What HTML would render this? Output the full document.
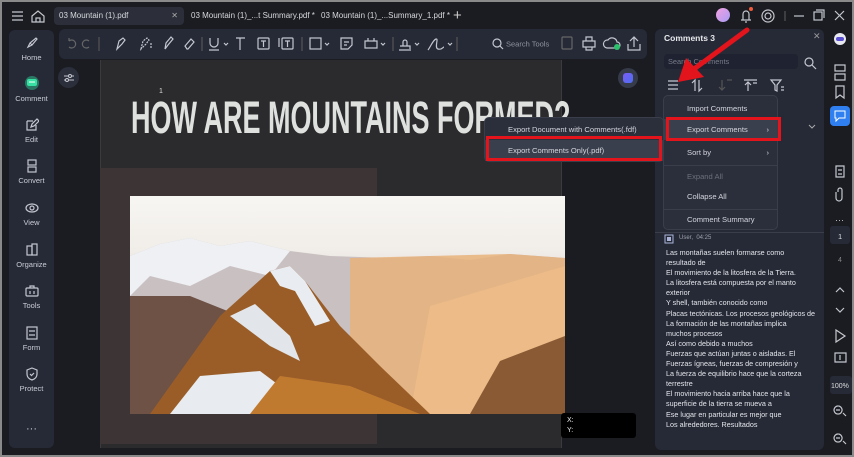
<!DOCTYPE html>
<html><head><meta charset="utf-8"><style>
*{margin:0;padding:0;box-sizing:border-box}
body{width:854px;height:457px;background:#8a8a8a;font-family:"Liberation Sans",sans-serif;overflow:hidden;position:relative}
.app{position:absolute;left:2px;top:2px;width:850px;height:453px;background:#1b1c21}
.abs{position:absolute}
.tab{position:absolute;top:5px;height:18px;font-size:8px;color:#d6d8de;line-height:18px;padding-left:5px}
.side{left:7px;top:28px;width:45px;height:418px;background:#262a37;border-radius:6px}
.si{position:absolute;left:0;width:45px;text-align:center;font-size:7.5px;color:#c9ccd4}
.si svg{display:block;margin:0 auto 3px}
.tb{left:57px;top:27px;width:588px;height:30px;background:#262a37;border-radius:6px}
.ic{stroke:#c4c7cf;fill:none;stroke-width:1.2}
.panel{left:653px;top:27px;width:169px;height:421px;background:#262a37;border-radius:6px}
.menu{background:#2b2f3c;border:1px solid #3a3e4a;border-radius:5px;font-size:7.6px;color:#d3d5dc}
.mi{position:absolute;left:0;right:0;height:21px;line-height:21px;padding-left:23px}
.red{position:absolute;border:3px solid #e3141c}
.ct{font-size:7.2px;color:#e4e6ea;line-height:10.1px}
</style></head><body><div class="app">
<svg class="abs" style="left:8px;top:6px" width="40" height="16"><g class="ic"><path d="M2 4h11M2 8h11M2 12h11"/><path d="M22 8l6-5 6 5v6h-12z"/><path d="M26 14v-4h4v4"/></g><path d="M45 3v11" stroke="#555" /></svg>
<div class="tab" style="left:52px;width:130px;background:#2c2f39;border-radius:4px">03 Mountain (1).pdf<span style="position:absolute;right:6px;color:#aaa">✕</span></div>
<div class="tab" style="left:184px">03 Mountain (1)_...t Summary.pdf *</div>
<div class="tab" style="left:314px">03 Mountain (1)_...Summary_1.pdf *</div>
<div class="tab" style="left:446px;font-size:15px;color:#ccc">+</div>
<div class="abs" style="left:714px;top:6px;width:14px;height:14px;border-radius:50%;background:linear-gradient(135deg,#f3a0e0,#a89cf5)"></div>
<svg class="abs" style="left:735px;top:4px" width="115" height="20"><g class="ic"><path d="M4 14h10M6 14V8a3 3 0 0 1 6 0v6M8 16h2"/><circle cx="31" cy="10" r="3"/><circle cx="31" cy="10" r="6"/><path d="M48 5v10" stroke="#555"/><path d="M57 10h10"/><rect x="77" y="6" width="8" height="8"/><path d="M79 4h8v8"/><path d="M98 5l9 9M107 5l-9 9"/></g><circle cx="14" cy="3" r="2" fill="#f05a3a"/></svg>
<div class="abs side">
<div class="si" style="top:6px"><svg width="14" height="14" class="ic"><path d="M3 11l2-4 6-5 1 1-5 6-4 2zM5 7l2 2"/></svg>Home</div>
<div class="si" style="top:45px"><svg width="16" height="16"><circle cx="8" cy="8" r="7" fill="#31d69b" opacity=".45"/><rect x="3" y="4" width="10" height="7" rx="2" fill="#37e0a3"/><path d="M5 7h6" stroke="#fff"/></svg>Comment</div>
<div class="si" style="top:88px"><svg width="14" height="14" class="ic"><path d="M2 3h6M2 3v9h9V7M6 9l1-3 5-5 2 2-5 5z"/></svg>Edit</div>
<div class="si" style="top:129px"><svg width="14" height="14" class="ic"><rect x="3" y="1" width="8" height="5"/><rect x="3" y="8" width="8" height="5"/></svg>Convert</div>
<div class="si" style="top:171px"><svg width="14" height="14" class="ic"><ellipse cx="7" cy="7" rx="6" ry="4"/><circle cx="7" cy="7" r="2"/></svg>View</div>
<div class="si" style="top:213px"><svg width="14" height="14" class="ic"><rect x="2" y="3" width="5" height="9"/><rect x="7" y="1" width="5" height="11"/></svg>Organize</div>
<div class="si" style="top:254px"><svg width="14" height="14" class="ic"><rect x="1" y="4" width="12" height="8" rx="1"/><path d="M5 4V2h4v2M5 7v3M9 7v3"/></svg>Tools</div>
<div class="si" style="top:296px"><svg width="14" height="14" class="ic"><rect x="2" y="1" width="10" height="12"/><path d="M4 5h6M4 9h6"/></svg>Form</div>
<div class="si" style="top:337px"><svg width="14" height="14" class="ic"><path d="M7 1l5 2v4c0 3-2 5-5 6-3-1-5-3-5-6V3z"/><path d="M5 7l1.5 1.5L9 6"/></svg>Protect</div>
<div class="si" style="top:393px;font-size:11px">···</div>
</div>
<div class="abs tb"><svg width="588" height="30"><g class="ic">
<path d="M10 12a4 4 0 1 1 0 6M10 12v-3M30 12a4 4 0 1 0 0 6" stroke="#666"/>
<path d="M40 8v14" stroke="#555"/>
<path d="M58 20l2-8 4-3 2 2-3 4z"/><path d="M82 20l2-8 4-3 2 2-3 4zM92 14v6" stroke-dasharray="2 1"/><path d="M106 20l1-6 5-6 2 2-5 6z"/><path d="M128 20l-2-3 6-7 3 3-6 7z"/>
<path d="M143 8v14" stroke="#555"/><path d="M151 9v5a4 4 0 0 0 8 0V9M150 21h10M165 14l2 2 2-2"/>
<path d="M177 9h9M181 9v12"/><rect x="199" y="9" width="11" height="11" rx="1"/><path d="M202 12h5M204.5 12v6"/><rect x="223" y="9" width="11" height="11" rx="1"/><path d="M226 12h5M228.5 12v6M220 9v9"/>
<path d="M243 8v14" stroke="#555"/><rect x="251" y="9" width="11" height="11"/><path d="M266 14l2 2 2-2"/>
<path d="M282 9h11v7l-4 4h-7zM285 13h5M285 16h3"/><path d="M306 12h12v7h-12zM309 9v3M315 9v3M322 14l2 2 2-2"/>
<path d="M334 8v14" stroke="#555"/><path d="M340 21h12M341 17h10v3M344 17v-4a2 2 0 1 1 4 0v4M356 14l2 2 2-2"/>
<path d="M369 21c3-4 5-10 8-11s-2 9 2 10 5-2 6-2M389 14l2 2 2-2"/><path d="M398 8v14" stroke="#555"/>
<circle cx="438" cy="14" r="4"/><path d="M441 17l3 3"/>
<rect x="503" y="8" width="10" height="12" rx="1" stroke="#666"/><path d="M524 12h12v6h-12zM527 12V8h6v4M527 18v3h6v-3"/><path d="M548 19a4 4 0 0 1 1-8 5 5 0 0 1 9 2 3 3 0 0 1 0 6zM575 9v9M571 12l4-4 4 4M569 15v6h12v-6"/></g>
<circle cx="558" cy="18" r="3" fill="#2bc06b"/>
<text x="447" y="17.5" font-size="7.5" fill="#8f93a0" font-family="Liberation Sans">Search Tools</text></svg></div>
<div class="abs" style="left:56px;top:65px;width:21px;height:21px;border-radius:50%;background:#2b2f3b"></div>
<svg class="abs" style="left:60px;top:69px" width="14" height="14"><g stroke="#c4c7cf" fill="none"><path d="M2 5h10M2 9h10"/><circle cx="8" cy="5" r="1.5" fill="#2b2f3b"/><circle cx="5" cy="9" r="1.5" fill="#2b2f3b"/></g></svg>
<div class="abs" style="left:98px;top:58px;width:462px;height:388px;background:#2b2b2e;border-left:1px solid #3b3b3e;border-right:1px solid #3b3b3e"></div>
<div class="abs" style="left:98px;top:166px;width:277px;height:276px;background:#3d3535"></div>
<div class="abs" style="left:157px;top:86px;font-size:7px;color:#ddd">1</div>
<div class="abs" style="left:129px;top:93px;font-size:45px;color:#dfe1df;font-weight:bold;transform:scaleX(0.6);transform-origin:0 0;white-space:nowrap;line-height:45px">HOW ARE MOUNTAINS FORMED?</div>
<div class="abs" style="left:128px;top:194px;width:435px;height:218px;background:linear-gradient(180deg,#f7f6f3 0%,#f1ede8 25%,#ddd4cf 45%,#b59a8a 70%,#8e6a52 100%);overflow:hidden">
<svg width="435" height="218">
<polygon points="0,60 30,48 60,42 90,50 120,45 160,55 200,60 260,62 300,60 340,64 380,58 435,62 435,218 0,218" fill="#c9c0c2"/>
<polygon points="0,60 30,48 60,42 90,50 120,45 160,55 140,80 100,70 60,90 20,80 0,100" fill="#eef0f3"/>
<polygon points="220,62 300,60 380,58 435,62 435,218 220,218" fill="#e8b27a" opacity=".85"/>
<polygon points="300,110 435,70 435,218 280,218" fill="#f1c088" opacity=".6"/>
<polygon points="0,100 60,100 110,120 150,170 120,218 0,218" fill="#6e5246"/>
<polygon points="20,218 90,120 140,75 160,70 175,85 210,130 250,170 300,218" fill="#9a5d28"/>
<polygon points="140,75 160,70 175,85 200,125 185,130 165,95 150,90" fill="#e9edf1"/>
<polygon points="100,120 125,108 160,140 170,165 140,150" fill="#e2e6ea"/>
<polygon points="40,218 70,180 130,175 150,190 160,218" fill="#e8ebef"/>
<polygon points="120,218 150,180 220,190 290,218" fill="#c07a30"/>
<polygon points="340,218 370,165 435,140 435,218" fill="#8a5a34"/>
</svg></div>
<div class="abs" style="left:616px;top:66px;width:20px;height:20px;border-radius:50%;background:#363b4a"></div>
<div class="abs" style="left:621px;top:71px;width:10px;height:10px;border-radius:3px;background:linear-gradient(135deg,#7a5cf5,#4f6ff0)"></div>
<div class="abs" style="left:559px;top:411px;width:75px;height:25px;background:#000;border-radius:3px;color:#eee;font-size:7px;padding:3px 6px;line-height:10px">X:<br>Y:</div>
<div class="abs panel">
<div class="abs" style="left:9px;top:4px;font-size:8.5px;color:#e8e9ec;font-weight:bold">Comments 3</div>
<div class="abs" style="left:158px;top:2px;font-size:9px;color:#999">✕</div>
<div class="abs" style="left:9px;top:25px;width:134px;height:15px;background:#1f2230;border-radius:4px;font-size:7.4px;color:#777b88;padding:3px 4px">Search Comments</div>
<svg class="abs" style="left:148px;top:27px" width="14" height="14"><g stroke="#c4c7cf" fill="none" stroke-width="1.2"><circle cx="6" cy="6" r="4"/><path d="M9 9l4 4"/></g></svg>
<svg class="abs" style="left:9px;top:48px" width="125" height="16"><g stroke="#c4c7cf" fill="none" stroke-width="1.2"><path d="M4 4h10M4 8h10M4 12h10M31 14V3l-3 3M35 3v11l3-3"/><path d="M58 3v10M55 10l3 3 3-3M63 3h5" stroke="#555"/><path d="M84 14V5M81 8l3-3 3 3M80 3h13M89 6h4"/><path d="M107 3h10l-4 5v6l-2-1V8zM117 10h3M117 13h3"/></g></svg>
<div class="abs" style="left:0;top:203px;width:169px;border-top:1px solid #3a3e4a"></div>
<svg class="abs" style="left:9px;top:205px" width="10" height="10"><rect x="1" y="1" width="8" height="8" fill="none" stroke="#a9b4d8"/><rect x="3" y="3" width="4" height="4" fill="#a9b4d8"/></svg>
<div class="abs" style="left:24px;top:206px;font-size:6px;color:#9ea2ad">User,&nbsp; 04:25</div>
<div class="abs ct" style="left:11px;top:219px;width:158px">Las montañas suelen formarse como<br>resultado de<br>El movimiento de la litosfera de la Tierra.<br>La litosfera está compuesta por el manto<br>exterior<br>Y shell, también conocido como<br>Placas tectónicas. Los procesos geológicos de<br>La formación de las montañas implica<br>muchos procesos<br>Así como debido a muchos<br>Fuerzas que actúan juntas o aisladas. El<br>Fuerzas ígneas, fuerzas de compresión y<br>La fuerza de equilibrio hace que la corteza<br>terrestre<br>El movimiento hacia arriba hace que la<br>superficie de la tierra se mueva a<br>Ese lugar en particular es mejor que<br>Los alrededores. Resultados</div>
<svg class="abs" style="left:152px;top:94px" width="10" height="8"><path d="M2 2l3 3 3-3" stroke="#aaa" fill="none"/></svg>
</div>
<svg class="abs" style="left:826px;top:28px" width="24" height="420"><g stroke="#c4c7cf" fill="none" stroke-width="1.2">
<path d="M7 35h10v6H7zM7 44h10v6H7zM8 56h8v12l-4-3-4 3zM8 136h8v11H8zM10 140h4M10 144h4M10 162v-2a2 2 0 0 1 4 0v8a3 3 0 0 1-6 0v-6"/>
<path d="M8 262l4-4 4 4M8 278l4 4 4-4M8 300l9 6-9 6zM7 323h11v9H7zM12 325v5M10 376a4 4 0 1 0 0.1 0M15 383l3 3M8 380h4M10 404a4 4 0 1 0 .1 0M15 411l3 3M8 408h4"/></g>
<circle cx="12" cy="9" r="6" fill="#e8e8f0"/><rect x="8" y="7" width="8" height="4" rx="2" fill="#5a4fd0"/>
<rect x="2" y="76" width="20" height="20" rx="4" fill="#2f7ff0"/><path d="M7 81h10v7h-6l-3 3v-3H7z" stroke="#fff" fill="none"/>
<text x="7" y="193" fill="#ccc" font-size="9" font-family="Liberation Sans">···</text>
<rect x="2" y="196" width="20" height="18" rx="3" fill="#262a37"/><text x="10" y="209" fill="#ddd" font-size="7.5" font-family="Liberation Sans">1</text>
<text x="10" y="232" fill="#888" font-size="7" font-family="Liberation Sans">4</text>
<rect x="2" y="346" width="22" height="18" rx="3" fill="#262a37"/><text x="3" y="358" fill="#ddd" font-size="7" font-family="Liberation Sans">100%</text></svg>
<div class="abs menu" style="left:661px;top:93px;width:115px;height:135px">
<div class="mi" style="top:2px">Import Comments</div>
<div class="mi" style="top:23px;background:#3a3f4e">Export Comments<span style="position:absolute;right:8px">›</span></div>
<div class="mi" style="top:46px">Sort by<span style="position:absolute;right:8px">›</span></div>
<div style="position:absolute;left:0;right:0;top:69px;border-top:1px solid #3a3e4a"></div>
<div class="mi" style="top:70px;color:#6b6f7a">Expand All</div>
<div class="mi" style="top:90px">Collapse All</div>
<div style="position:absolute;left:0;right:0;top:113px;border-top:1px solid #3a3e4a"></div>
<div class="mi" style="top:113px">Comment Summary</div>
</div>
<div class="abs menu" style="left:482px;top:115px;width:180px;height:45px">
<div class="mi" style="top:1px">Export Document with Comments(.fdf)</div>
<div class="mi" style="top:22px;background:#3a3f4e">Export Comments Only(.pdf)</div>
</div>
<div class="red" style="left:664px;top:115px;width:115px;height:24px"></div>
<div class="red" style="left:484px;top:134px;width:176px;height:25px"></div>
<svg class="abs" style="left:660px;top:20px" width="100" height="70"><path d="M85 8L32 47" stroke="#e3141c" stroke-width="5" stroke-linecap="round"/><polygon points="16,60 24,36 42,55" fill="#e3141c"/></svg>
</div></body></html>
